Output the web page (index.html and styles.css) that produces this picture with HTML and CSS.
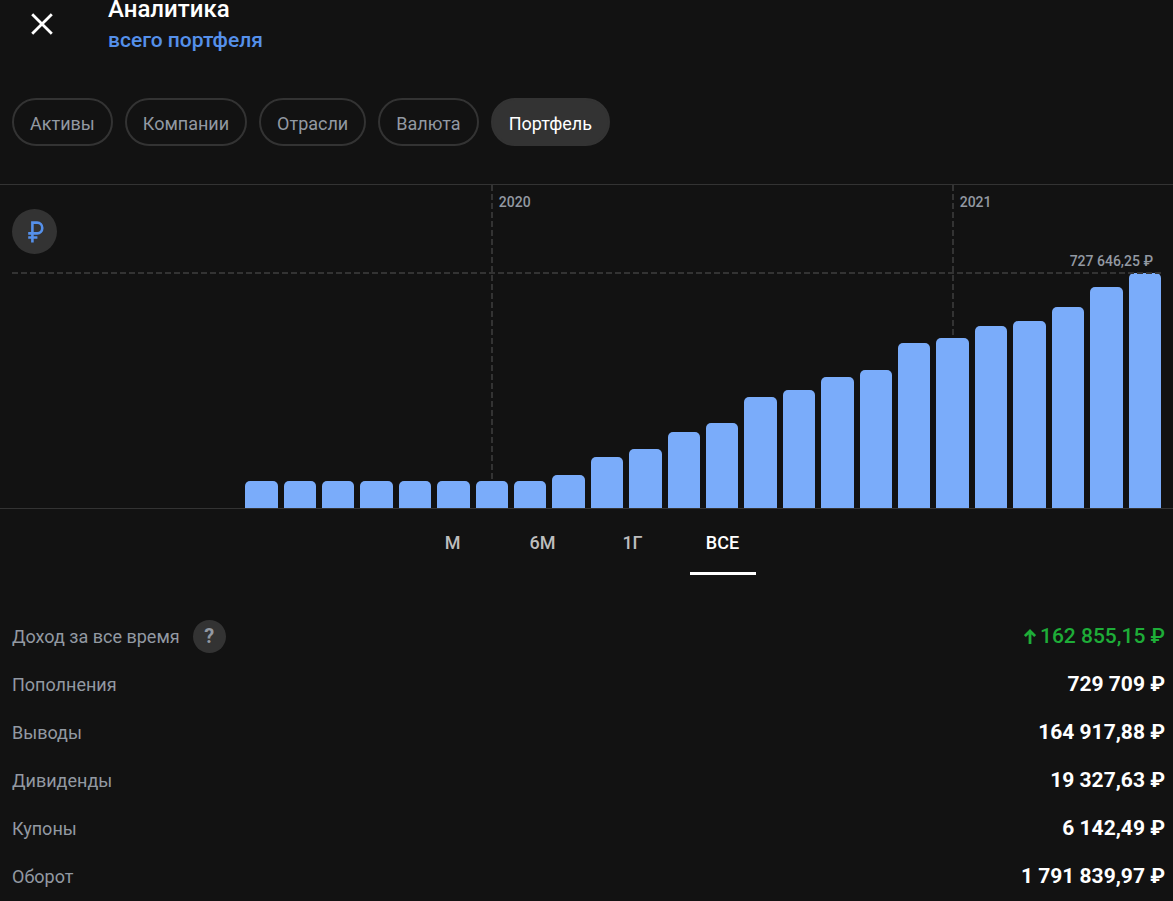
FILE: index.html
```html
<!DOCTYPE html>
<html lang="ru">
<head>
<meta charset="utf-8">
<meta name="viewport" content="width=device-width, initial-scale=1">
<title>Аналитика</title>
<link rel="stylesheet" href="styles.css">
</head>
<body>
<header class="header">
  <button class="close" type="button" aria-label="Закрыть">
    <svg width="22" height="22" viewBox="0 0 22 22" fill="none" stroke="currentColor" stroke-width="2.8"><path d="M1.2 1.2 20.8 20.8M20.8 1.2 1.2 20.8"/></svg>
  </button>
  <div class="heading">
    <h1 class="title">Аналитика</h1>
    <a class="subtitle" href="#">всего портфеля</a>
  </div>
</header>

<nav class="chips" aria-label="Разделы">
  <button class="chip" type="button">Активы</button>
  <button class="chip" type="button">Компании</button>
  <button class="chip" type="button">Отрасли</button>
  <button class="chip" type="button">Валюта</button>
  <button class="chip chip-active" type="button">Портфель</button>
</nav>

<main>
  <section class="chart" aria-label="Стоимость портфеля">
    <div class="columns">
      <div class="column"><div class="bar" style="height:27px"></div></div>
      <div class="column"><div class="bar" style="height:27px"></div></div>
      <div class="column"><div class="bar" style="height:27px"></div></div>
      <div class="column"><div class="bar" style="height:27px"></div></div>
      <div class="column"><div class="bar" style="height:27px"></div></div>
      <div class="column"><div class="bar" style="height:27px"></div></div>
      <div class="column"><div class="year">2020</div><div class="bar" style="height:27px"></div></div>
      <div class="column"><div class="bar" style="height:27px"></div></div>
      <div class="column"><div class="bar" style="height:33px"></div></div>
      <div class="column"><div class="bar" style="height:51px"></div></div>
      <div class="column"><div class="bar" style="height:59px"></div></div>
      <div class="column"><div class="bar" style="height:76px"></div></div>
      <div class="column"><div class="bar" style="height:85px"></div></div>
      <div class="column"><div class="bar" style="height:111px"></div></div>
      <div class="column"><div class="bar" style="height:118px"></div></div>
      <div class="column"><div class="bar" style="height:131px"></div></div>
      <div class="column"><div class="bar" style="height:138px"></div></div>
      <div class="column"><div class="bar" style="height:165px"></div></div>
      <div class="column"><div class="year">2021</div><div class="bar" style="height:170px"></div></div>
      <div class="column"><div class="bar" style="height:182px"></div></div>
      <div class="column"><div class="bar" style="height:187px"></div></div>
      <div class="column"><div class="bar" style="height:201px"></div></div>
      <div class="column"><div class="bar" style="height:221px"></div></div>
      <div class="column"><div class="bar" style="height:235px"></div></div>
    </div>
    <div class="peak">727 646,25 ₽</div>
    <button class="currency" type="button" aria-label="Рубли">
      <svg width="18" height="22" viewBox="0 0 18 22" fill="none" stroke="currentColor" stroke-width="2.6"><path d="M6.4 21.5V1.6H11.2a4.9 5.2 0 0 1 0 10.8H2.2M2.2 16.5H11.4"/></svg>
    </button>
  </section>

  <div class="periods">
    <button class="period" type="button">М</button>
    <button class="period" type="button">6М</button>
    <button class="period" type="button">1Г</button>
    <button class="period period-active" type="button">ВСЕ</button>
  </div>

  <dl class="stats">
    <div class="stat">
      <dt class="label">Доход за все время <button class="help" type="button" aria-label="Справка">?</button></dt>
      <dd class="value value-gain">
        <svg class="arrow" width="12" height="15" viewBox="0 0 12 15" fill="none" stroke="currentColor" stroke-width="2.8"><path d="M6 15V2M0.9 7.1 6 2 11.1 7.1"/></svg>162 855,15 ₽</dd>
    </div>
    <div class="stat"><dt class="label">Пополнения</dt><dd class="value">729 709 ₽</dd></div>
    <div class="stat"><dt class="label">Выводы</dt><dd class="value">164 917,88 ₽</dd></div>
    <div class="stat"><dt class="label">Дивиденды</dt><dd class="value">19 327,63 ₽</dd></div>
    <div class="stat"><dt class="label">Купоны</dt><dd class="value">6 142,49 ₽</dd></div>
    <div class="stat"><dt class="label">Оборот</dt><dd class="value">1 791 839,97 ₽</dd></div>
  </dl>
</main>
</body>
</html>
```
FILE: styles.css
```css
* {
  box-sizing: border-box;
}

body {
  margin: 0;
  background: #121212;
  color: #fff;
  font-family: Roboto, "Noto Sans", sans-serif;
  font-size: 18px;
}

button {
  padding: 0;
  border: 0;
  background: none;
  color: inherit;
  font: inherit;
  cursor: pointer;
}

svg {
  display: block;
}

.header {
  display: flex;
  align-items: flex-start;
  gap: 48px;
  height: 98px;
  padding-left: 24px;
}

.close {
  display: grid;
  place-items: center;
  width: 36px;
  height: 48px;
}

.heading {
  display: flex;
  flex-direction: column;
  gap: 6px;
}

.title {
  margin: 0;
  font-size: 24px;
  font-weight: 500;
  line-height: 18px;
}

.subtitle {
  color: #5590ea;
  font-size: 21px;
  font-weight: 500;
  line-height: 32px;
  text-decoration: none;
}

.chips {
  display: flex;
  gap: 12px;
  padding: 0 12px 38px;
}

.chip {
  height: 48px;
  padding: 2px 16px 0;
  border: 2px solid #333;
  border-radius: 24px;
  color: #9299a2;
}

.chip-active {
  background: #333;
  color: #fff;
}

.chart {
  position: relative;
  height: 325px;
  border-top: 1px solid #333;
  border-bottom: 1px solid #333;
}

.columns {
  display: flex;
  gap: 6px;
  height: 100%;
  padding: 0 12px 0 20.9%;
}

.column {
  position: relative;
  display: flex;
  flex: 1;
  flex-direction: column;
  justify-content: flex-end;
}

.bar {
  position: relative;
  border-radius: 5px 5px 0 0;
  background: #7aacfa;
}

.year {
  position: absolute;
  top: 0;
  bottom: 0;
  left: calc(50% - 1px);
  padding: 8px 0 0 8px;
  background: repeating-linear-gradient(#333 0 6px, transparent 6px 9px) 0 0 / 2px 100% no-repeat;
  color: #9299a2;
  font-size: 14px;
  font-weight: 500;
  line-height: 18px;
}

.peak {
  position: absolute;
  top: 67px;
  right: 12px;
  left: 12px;
  padding-right: 8px;
  padding-bottom: 4px;
  background: repeating-linear-gradient(90deg, #333 0 6px, transparent 6px 9px) 0 100% / 100% 2px no-repeat;
  color: #9299a2;
  font-size: 14px;
  font-weight: 500;
  line-height: 18px;
  text-align: right;
}

.currency {
  position: absolute;
  top: 24px;
  left: 12px;
  display: grid;
  place-items: center;
  width: 45px;
  height: 45px;
  border-radius: 50%;
  background: #333;
  color: #5590ea;
}

.periods {
  display: flex;
  justify-content: center;
  gap: 24px;
  padding-bottom: 37px;
  padding-left: 2px;
}

.period {
  width: 66px;
  height: 66px;
  padding-top: 4px;
  border-bottom: 3px solid transparent;
  color: #bdbdbd;
  font-weight: 500;
}

.period-active {
  border-color: #fff;
  color: #fff;
}

.stats {
  margin: 0;
  padding: 0 8px 0 12px;
}

.stat {
  display: flex;
  align-items: center;
  justify-content: space-between;
  height: 48px;
}

.label {
  display: flex;
  align-items: center;
  gap: 13px;
  color: #9299a2;
}

.help {
  width: 33px;
  height: 33px;
  border-radius: 50%;
  background: #333;
  font-size: 20px;
  font-weight: 700;
}

.value {
  display: flex;
  align-items: center;
  gap: 4px;
  margin: 0;
  font-size: 21px;
  font-weight: 700;
}

.value-gain {
  color: #1ead38;
  font-weight: 500;
}
```
